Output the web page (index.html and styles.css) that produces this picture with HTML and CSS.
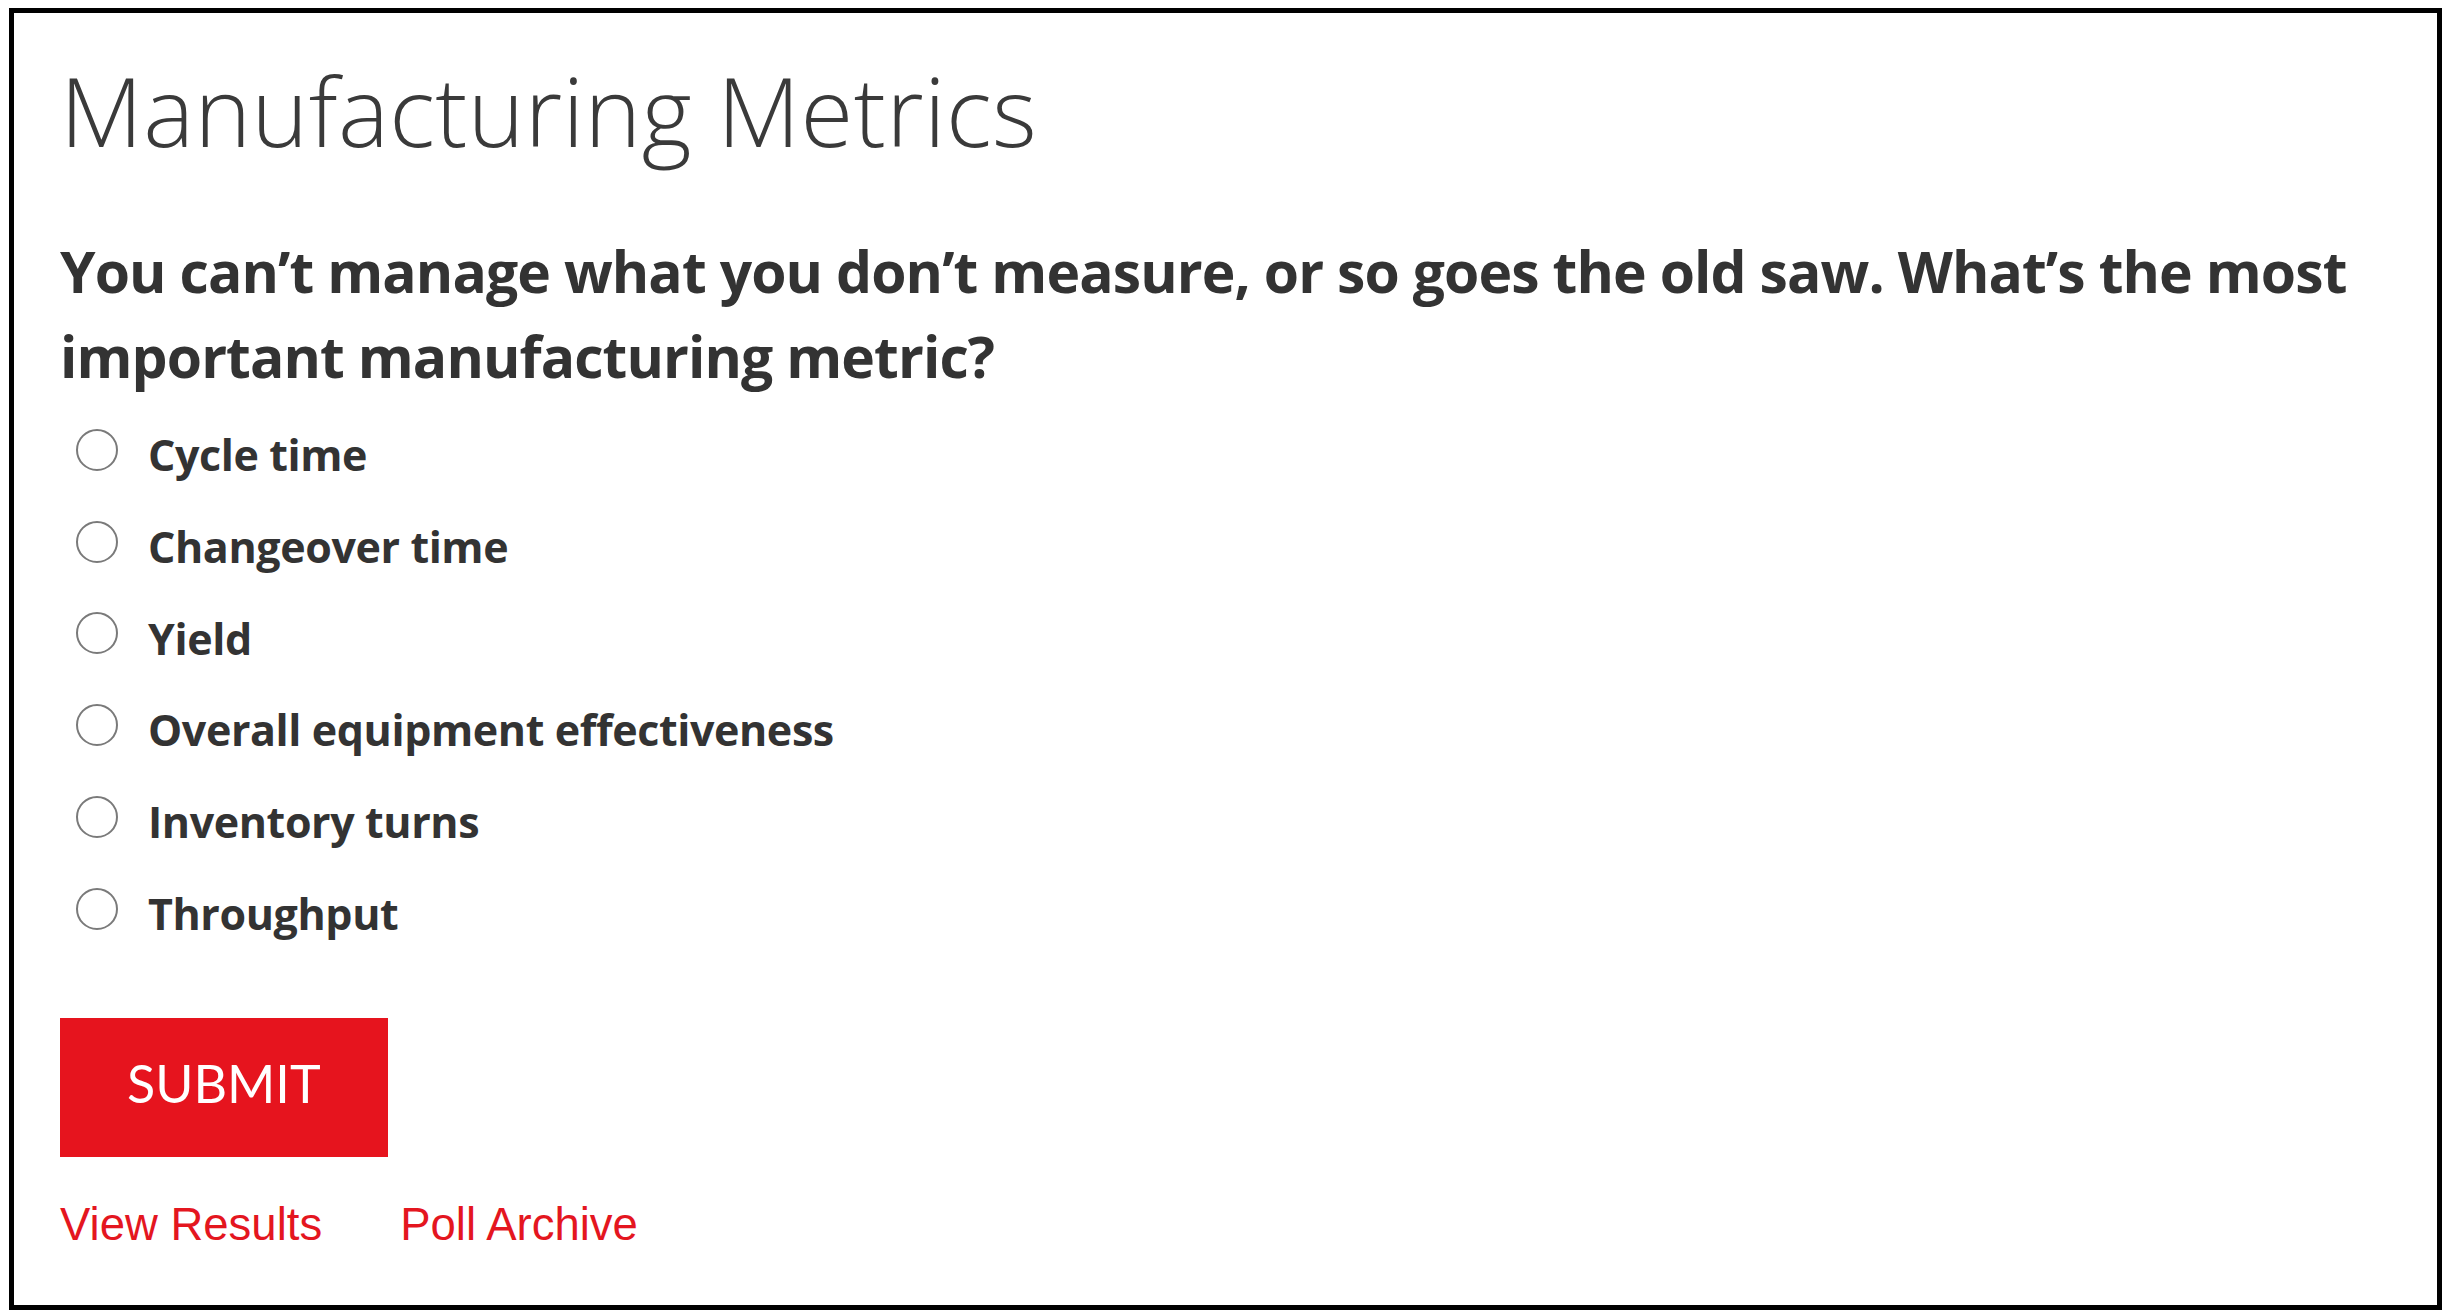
FILE: index.html
```html
<!DOCTYPE html>
<html lang="en">
<head>
<meta charset="utf-8">
<title>Manufacturing Metrics</title>
<link rel="stylesheet" href="styles.css">
</head>
<body>
<div class="poll">
	<h2 class="poll-title">Manufacturing Metrics</h2>
	<form class="poll-form">
		<p class="poll-question">You can’t manage what you don’t measure, or so goes the old saw. What’s the most important manufacturing metric?</p>
		<ul class="poll-answers">
			<li><label><input type="radio" name="answer" value="1"><span>Cycle time</span></label></li>
			<li><label><input type="radio" name="answer" value="2"><span>Changeover time</span></label></li>
			<li><label><input type="radio" name="answer" value="3"><span>Yield</span></label></li>
			<li><label><input type="radio" name="answer" value="4"><span>Overall equipment effectiveness</span></label></li>
			<li><label><input type="radio" name="answer" value="5"><span>Inventory turns</span></label></li>
			<li><label><input type="radio" name="answer" value="6"><span>Throughput</span></label></li>
		</ul>
		<button type="button" class="poll-submit">SUBMIT</button>
	</form>
	<div class="poll-links">
		<a href="javascript:void(0);">View Results</a>
		<a href="javascript:void(0);">Poll Archive</a>
	</div>
</div>
</body>
</html>
```

FILE: styles.css
```css
html, body {margin: 0; padding: 0; background: #fff;}
ul, li {margin: 0; padding: 0; list-style: none;}

.poll {
	box-sizing: border-box;
	height: calc(100vh - 12px);
	margin: 8px 6px 4px 9px;
	padding: 39px 46px 0;
	border: 5px solid #000;
	font-family: "Open Sans", Lato, sans-serif;
	color: #333;
}

.poll-title {
	margin: 0;
	font-size: 96px;
	font-weight: 300;
	line-height: 115px;
	letter-spacing: 0.4px;
	color: #3a3a3a;
}

.poll-form {
	margin: 0;
}

.poll-question {
	margin: 62px 0 0;
	font-size: 57px;
	font-weight: 700;
	line-height: 85px;
	letter-spacing: -0.9px;
}

.poll-answers {
	margin-top: 10px;
}

.poll-answers label {
	display: flex;
	align-items: center;
	height: 91.8px;
	font-size: 43px;
	font-weight: 700;
	line-height: 91.8px;
	letter-spacing: -0.4px;
	cursor: pointer;
}

.poll-answers input {
	-webkit-appearance: none;
	appearance: none;
	box-sizing: border-box;
	width: 42px;
	height: 42px;
	margin: 0 30px 10px 16px;
	border: 2px solid #7a7a7a;
	border-radius: 50%;
	background: #fff;
	flex: none;
}

.poll-answers input:checked {
	background: radial-gradient(circle, #333 0 9px, #fff 10px);
}

.poll-submit {
	display: block;
	margin-top: 58px;
	padding: 0 67px 8px;
	border: 0;
	border-radius: 0;
	background: #e6141e;
	color: #fff;
	font-family: Lato, "Open Sans", sans-serif;
	font-size: 52px;
	font-weight: 400;
	line-height: 131px;
	cursor: pointer;
}

.poll-links {
	display: flex;
	gap: 78px;
	margin-top: 42px;
	font-family: "Liberation Sans", Arial, sans-serif;
	font-size: 45.5px;
	line-height: 52px;
}

.poll-links a {
	color: #e4161f;
	text-decoration: none;
}
```
